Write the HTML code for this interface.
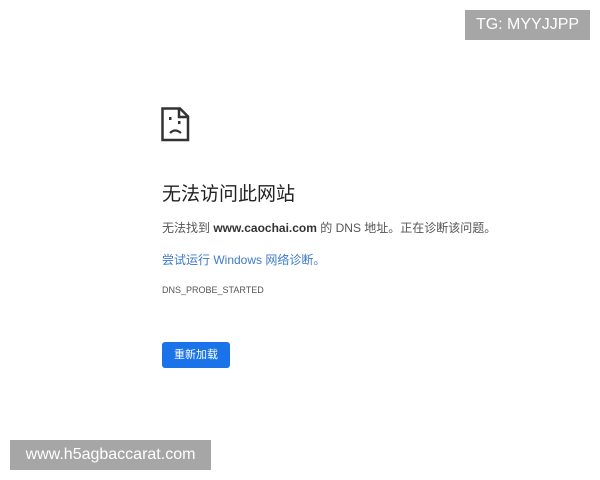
<!DOCTYPE html>
<html><head><meta charset="utf-8"><style>
body{margin:0;width:600px;height:480px;background:#fff;position:relative;overflow:hidden;font-family:"Liberation Sans","Noto Sans CJK SC",sans-serif}
.a{position:absolute;white-space:nowrap}
</style></head><body>
<div class="a" style="left:465px;top:10px;width:125px;height:30px;background:#a6a6a6;color:#fff;font-size:16px;line-height:30px;text-align:center">TG: MYYJJPP</div>
<svg class="a" style="left:161px;top:107px" width="30" height="36" viewBox="0 0 30 36">
<path d="M1.5 1.5H19L27 9.5V33H1.5Z" fill="none" stroke="#333" stroke-width="2.5"/>
<path d="M18 1.5V10H27" fill="none" stroke="#333" stroke-width="2.5"/>
<rect x="8" y="10" width="2.5" height="3" fill="#333"/><rect x="17" y="14" width="2.5" height="3" fill="#333"/>
<path d="M9 26Q14 21 20 26" fill="none" stroke="#333" stroke-width="2.2"/>
</svg>
<div class="a" style="left:162px;top:179px;font-size:19px;color:#222">无法访问此网站</div>
<div class="a" style="left:162px;top:219px;font-size:12px;color:#555">无法找到 <b style="color:#333">www.caochai.com</b> 的 DNS 地址。正在诊断该问题。</div>
<div class="a" style="left:162px;top:251px;font-size:12px;color:#3d7bc9">尝试运行 Windows 网络诊断。</div>
<div class="a" style="left:162px;top:285px;font-size:9px;color:#555">DNS_PROBE_STARTED</div>
<div class="a" style="left:162px;top:342px;width:68px;height:26px;background:#1a73e8;border-radius:3px;color:#fff;font-size:11px;line-height:26px;text-align:center">重新加载</div>
<div class="a" style="left:10px;top:440px;width:201px;height:30px;background:#a6a6a6;color:#fff;font-size:16px;line-height:30px;text-align:center">www.h5agbaccarat.com</div>
</body></html>
